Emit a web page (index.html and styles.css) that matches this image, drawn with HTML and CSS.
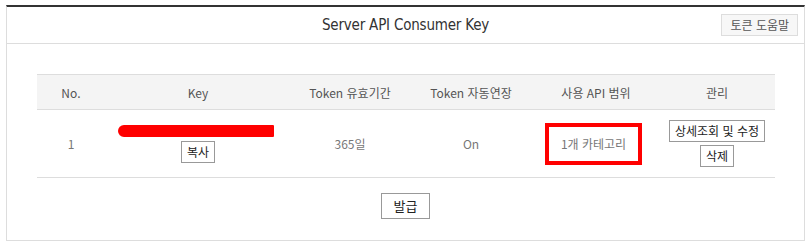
FILE: index.html
```html
<!DOCTYPE html>
<html lang="ko">
<head>
<meta charset="utf-8">
<title>Server API Consumer Key</title>
<link rel="stylesheet" href="styles.css">
</head>
<body>
<div class="panel">
  <div class="panel-head">
    <span></span>
    <h1 class="title">Server API Consumer Key</h1>
    <button class="help-btn" type="button">토큰 도움말</button>
  </div>
  <div class="panel-body">
    <table class="key-table">
      <colgroup>
        <col class="c-no"><col class="c-key"><col class="c-exp"><col class="c-auto"><col class="c-scope"><col class="c-manage">
      </colgroup>
      <thead>
        <tr>
          <th>No.</th>
          <th>Key</th>
          <th>Token 유효기간</th>
          <th>Token 자동연장</th>
          <th>사용 API 범위</th>
          <th>관리</th>
        </tr>
      </thead>
      <tbody>
        <tr>
          <td>1</td>
          <td>
            <div class="stack">
              <span class="redact"></span>
              <button class="btn" type="button">복사</button>
            </div>
          </td>
          <td>365일</td>
          <td>On</td>
          <td><span class="highlight">1개 카테고리</span></td>
          <td>
            <div class="stack stack-tight">
              <button class="btn" type="button">상세조회 및 수정</button>
              <button class="btn" type="button">삭제</button>
            </div>
          </td>
        </tr>
      </tbody>
    </table>
    <div class="actions">
      <button class="btn btn-issue" type="button">발급</button>
    </div>
  </div>
</div>
</body>
</html>
```
FILE: styles.css
```css
* { box-sizing: border-box; }
html, body { margin: 0; padding: 0; background: #fff; }
body {
  font-family: "Noto Sans CJK KR", "Noto Sans", sans-serif;
  font-size: 12px;
  color: #777;
}
.panel {
  margin: 5px 0 0 6px;
  width: 799px;
  height: 236px;
  border: 1px solid #ddd;
  border-top: 2px solid #333;
  display: flex;
  flex-direction: column;
}
.panel-head {
  height: 37px;
  border-bottom: 1px solid #ddd;
  display: grid;
  grid-template-columns: 1fr auto 1fr;
  align-items: center;
}
.title {
  margin: 0;
  font-family: "DejaVu Sans Condensed", "DejaVu Sans", sans-serif;
  font-stretch: condensed;
  font-weight: normal;
  font-size: 15px;
  color: #333;
  letter-spacing: -0.2px;
}
.help-btn {
  justify-self: end;
  margin-right: 6px;
  height: 22px;
  padding: 0 8px;
  background: #f7f7f7;
  border: 1px solid #ddd;
  font-family: "Noto Sans CJK KR", sans-serif;
  font-size: 12px;
  line-height: 20px;
  color: #555;
}
.panel-body {
  padding: 30px 0 0 30px;
}
.key-table {
  width: 738px;
  border-collapse: collapse;
  table-layout: fixed;
  border-top: 1px solid #ddd;
}
.c-no { width: 68px; }
.c-key { width: 186px; }
.c-exp { width: 118px; }
.c-auto { width: 124px; }
.c-scope { width: 126px; }
.c-manage { width: 116px; }
.key-table th {
  height: 35px;
  background: #f4f4f4;
  border-bottom: 1px solid #ddd;
  font-weight: normal;
  color: #555;
  font-size: 12px;
  padding: 0;
  text-align: center;
}
.key-table td {
  height: 68px;
  border-bottom: 1px solid #ddd;
  text-align: center;
  vertical-align: middle;
  padding: 0;
  color: #777;
  font-size: 12px;
}
.stack {
  display: flex;
  flex-direction: column;
  align-items: center;
  gap: 4px;
}
.stack-tight { gap: 3px; }
.redact {
  display: block;
  width: 156px;
  height: 12px;
  background: #ff0000;
  border-radius: 6px 1px 1px 6px;
  margin-left: -4px;
}
.btn {
  height: 22px;
  padding: 0 5px;
  background: #fff;
  border: 1px solid #999;
  font-family: "Noto Sans CJK KR", sans-serif;
  font-size: 12px;
  line-height: 20px;
  color: #222;
}
.highlight {
  display: inline-block;
  border: 4px solid #ff0000;
  padding: 0 12px;
  height: 42px;
  line-height: 34px;
  margin-left: -5px;
}
.actions {
  display: flex;
  justify-content: center;
  padding: 15px 30px 0 0;
}
.btn-issue {
  height: 26px;
  padding: 0 12px;
  font-size: 13px;
  line-height: 24px;
  border-color: #999;
}
```
